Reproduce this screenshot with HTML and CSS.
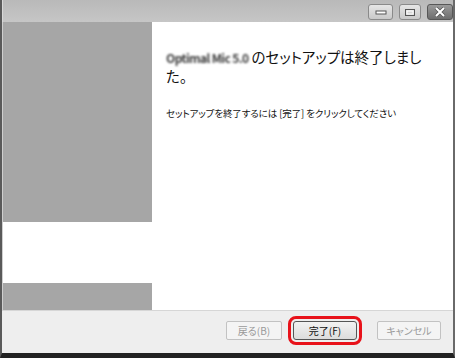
FILE: index.html
```html
<!DOCTYPE html>
<html lang="ja">
  <head>
    <meta charset="UTF-8" />
    <title>セットアップ</title>
    <link rel="stylesheet" href="styles.css">
  </head>
  <body>
    <div class="window">
      <div class="titlebar">
        <div class="caption">
          <span class="cap-btn">
            <svg width="12" height="6" viewBox="0 0 12 6"><rect x="1" y="2" width="10" height="3" fill="#fff" stroke="#555" stroke-width="1"/></svg>
          </span>
          <span class="cap-btn max">
            <svg width="12" height="9" viewBox="0 0 12 9"><rect x="1.5" y="1.5" width="9" height="6" fill="none" stroke="#555" stroke-width="1"/><rect x="3" y="3" width="6" height="3" fill="none" stroke="#fff" stroke-width="1"/></svg>
          </span>
          <span class="cap-btn close">
            <svg width="14" height="10" viewBox="0 0 14 10"><path d="M3 1 L11 9 M11 1 L3 9" stroke="#555" stroke-width="3.5"/><path d="M3 1 L11 9 M11 1 L3 9" stroke="#fff" stroke-width="2"/></svg>
          </span>
        </div>
      </div>

      <div class="body">
        <div class="side">
          <div class="side-top"></div>
          <div class="side-gap"></div>
          <div class="side-bottom"></div>
        </div>
        <div class="content">
          <h1 class="heading"><span class="blur">Optimal Mic 5.0</span><span>のセットアップは終了しました。</span></h1>
          <p class="note">セットアップを終了するには [完了] をクリックしてください</p>
        </div>
      </div>

      <div class="footer">
        <button class="btn back" disabled>戻る(<u>B</u>)</button>
        <button class="btn default">完了(<u>F</u>)</button>
        <button class="btn cancel" disabled>キャンセル</button>
      </div>
    </div>
  </body>
</html>
```

FILE: styles.css
```css
* {
  margin: 0;
  padding: 0;
  box-sizing: border-box;
}

body {
  font-family: "Noto Sans CJK JP", "Noto Sans", sans-serif;
  background: #fff;
}

.window {
  width: 455px;
  height: 358px;
  display: flex;
  flex-direction: column;
  border-left: 2px solid #5a5a5a;
  border-right: 2px solid #6a6a6a;
  border-bottom: 5px solid #222;
  background: #eeeeee;
}

/* Title bar */
.titlebar {
  height: 22px;
  background: linear-gradient(#b9b9b9, #c6c6c6);
  border-left: 1px solid #d8d8d8;
  display: flex;
  justify-content: flex-end;
  align-items: flex-start;
}

.caption {
  display: flex;
  gap: 6px;
  padding-top: 4px;
}

.cap-btn {
  width: 25px;
  height: 16px;
  display: flex;
  align-items: center;
  justify-content: center;
  border: 1px solid #8a8a8a;
  border-radius: 3px;
  background: linear-gradient(#e6e6e6, #c9c9c9);
}

.cap-btn.max {
  width: 22px;
}

.cap-btn.close {
  width: 26px;
  background: linear-gradient(#9a9a9a, #6e6e6e);
  border-color: #575757;
}

.body {
  height: 288px;
  display: flex;
  background: #fff;
}

.side {
  width: 150px;
  display: flex;
  flex-direction: column;
  border-left: 1px solid #cfcfcf;
}

.side-top {
  height: 200px;
  background: #a6a6a6;
}

.side-gap {
  height: 61px;
  background: #fff;
}

.side-bottom {
  height: 27px;
  background: #a6a6a6;
}

.content {
  flex: 1;
  padding: 26px 12px 0 14px;
  font-feature-settings: "palt";
}

.heading {
  font-size: 14.5px;
  font-weight: normal;
  line-height: 18px;
  color: #111;
  width: 262px;
}

.blur {
  font-size: 12px;
  font-weight: bold;
  letter-spacing: -0.6px;
  color: #3c3c3c;
  filter: blur(1.2px);
  margin-right: 3px;
}

.note {
  margin-top: 21px;
  font-size: 9.5px;
  color: #111;
  letter-spacing: -0.1px;
}

/* Buttons */
.footer {
  flex: 1;
  border-top: 1px solid #d6d6d6;
  display: flex;
  justify-content: flex-end;
  align-items: center;
  padding: 0 12px 4px 0;
}

.btn {
  width: 64px;
  height: 19px;
  font-family: "Noto Sans CJK JP", sans-serif;
  font-size: 10px;
  font-feature-settings: "palt";
  color: #9a9a9a;
  background: #f4f4f4;
  border: 1px solid #c2c2c2;
  border-radius: 2px;
}

.btn u {
  text-decoration: none;
}

.btn.back {
  width: 56px;
  margin-right: 11px;
}

.btn.default {
  color: #111;
  border: 1px solid #555;
  background: linear-gradient(#f2f2f2, #dcdcdc);
  outline: 3px solid #e8121a;
  outline-offset: 2px;
  border-radius: 3px;
  margin-right: 20px;
}
```
